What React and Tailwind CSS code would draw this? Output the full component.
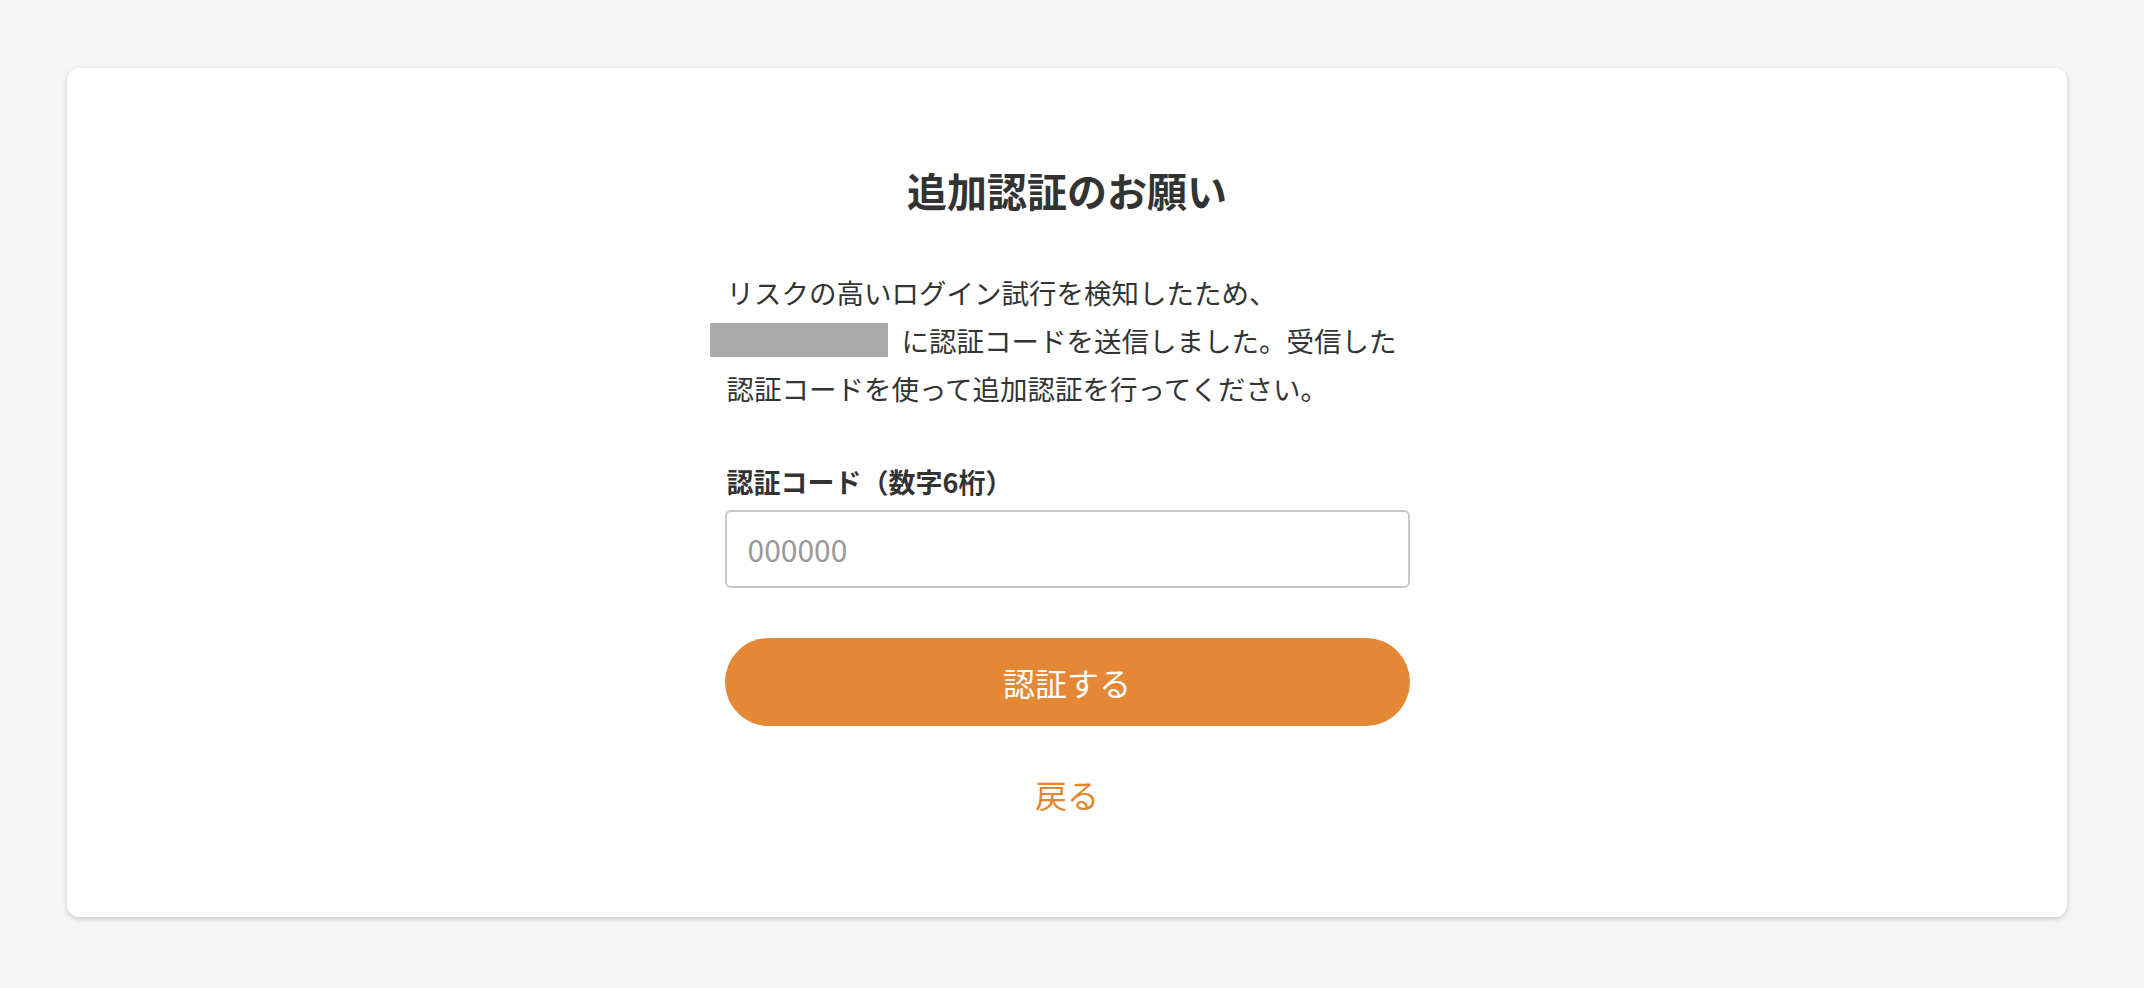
import React, { useState } from 'react';

const font = { fontFamily: '"Noto Sans CJK JP", "Noto Sans", sans-serif' };

const App = () => {
  const [code, setCode] = useState('');

  return (
    <div className="min-h-[988px] w-full bg-[#f5f5f5] pt-[68px] pl-[67px]" style={font}>
      <div className="w-[2000px] h-[849px] bg-white rounded-[12px] shadow-[0_2px_5px_rgba(0,0,0,0.18)] flex flex-col items-center pt-[92px]">
        <h1 className="text-[40px] leading-[60px] font-bold text-[#333333]">追加認証のお願い</h1>

        <div className="w-[685px] mt-[48px] text-[27.5px] leading-[48px] text-[#333333]">
          <div className="pl-[2px] whitespace-nowrap">リスクの高いログイン試行を検知したため、</div>
          <div className="flex items-center -ml-[15px] whitespace-nowrap">
            <span className="inline-block w-[178px] h-[34px] bg-[#aaaaaa]" />
            <span className="ml-[14px]">に認証コードを送信しました。受信した</span>
          </div>
          <div className="pl-[2px] whitespace-nowrap">認証コードを使って追加認証を行ってください。</div>
        </div>

        <div className="w-[685px] mt-[50px]">
          <label className="block pl-[2px] text-[27px] leading-[40px] font-bold text-[#333333]">認証コード（数字6桁）</label>
          <input
            type="text"
            value={code}
            onChange={(e) => setCode(e.target.value)}
            placeholder="000000"
            className="mt-[8px] block w-full h-[78px] border-2 border-[#c8c8c8] rounded-[6px] px-[21px] text-[30px] text-[#333333] placeholder:text-[#999999] outline-none"
          />
          <button className="mt-[50px] w-full h-[88px] rounded-full bg-[#e58835] text-white text-[32px]">
            認証する
          </button>
        </div>

        <a href="#" className="mt-[46px] text-[32px] leading-[44px] text-[#e8832e]">戻る</a>
      </div>
    </div>
  );
};

export default App;
